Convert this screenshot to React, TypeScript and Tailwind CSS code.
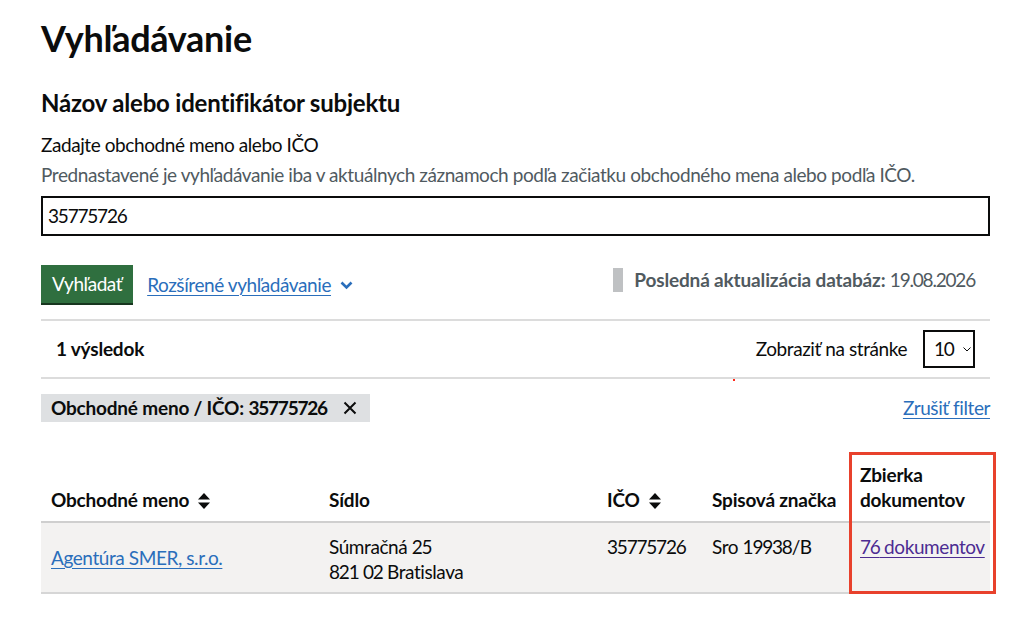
import React from "react";

const font = { fontFamily: "Lato, 'Noto Sans', sans-serif" };

// digits in Lato run wider than the rest of the face, so they get pulled in a little
function Num({ children }: { children: React.ReactNode }) {
  return <span className="tracking-[-1.2px]">{children}</span>;
}

function SortIcon() {
  return (
    <svg width="12" height="16" viewBox="0 0 12 16" className="inline-block ml-[9px] align-[-2px]">
      <path d="M6 0 L12 6.5 H0 Z" fill="#0b0c0c" />
      <path d="M6 16 L12 9.5 H0 Z" fill="#0b0c0c" />
    </svg>
  );
}

export default function App() {
  return (
    <div className="min-h-screen bg-white text-[#0b0c0c] tracking-[-0.42px]" style={font}>
      <div className="px-[41px] pt-[16px] w-[1031px]">
        <h1 className="text-[36px] leading-[44px] font-bold tracking-[-0.3px]">Vyhľadávanie</h1>
        <h2 className="mt-[28px] text-[24px] leading-[30px] font-bold tracking-[-0.2px]">Názov alebo identifikátor subjektu</h2>
        <div className="mt-[14px] text-[19px] leading-[25px]">Zadajte obchodné meno alebo IČO</div>
        <div className="mt-[5px] text-[19px] leading-[25px] text-[#505a5f]">
          Prednastavené je vyhľadávanie iba v aktuálnych záznamoch podľa začiatku obchodného mena alebo podľa IČO.
        </div>
        <div className="mt-[9px] w-[949px] h-[40px] border-2 border-[#0b0c0c] flex items-center px-[5px] text-[19px]">
          <Num>35775726</Num>
        </div>

        <div className="mt-[29px] w-[949px] flex items-start justify-between">
          <div className="flex items-center gap-[14px]">
            <button className="h-[38px] px-[11px] bg-[#2f6f3f] text-white text-[19px] shadow-[0_2px_0_#17361f] mb-[2px]">
              Vyhľadať
            </button>
            <a className="text-[19px] text-[#2a6ebb] underline underline-offset-[3px] decoration-1 flex items-center gap-[9px]" href="#">
              Rozšírené vyhľadávanie
              <svg width="13" height="9" viewBox="0 0 13 9">
                <path d="M1.5 1.5 L6.5 6.5 L11.5 1.5" stroke="#2a6ebb" strokeWidth="2.6" fill="none" />
              </svg>
            </a>
          </div>
          <div className="flex items-center mr-[15px] mt-[1px]">
            <div className="w-[10px] h-[24px] bg-[#bfc1c3] mr-[11px]" />
            <span className="text-[19px] text-[#505a5f]">
              <span className="font-bold tracking-[-0.15px]">Posledná aktualizácia databáz:</span> <Num>19.08.2026</Num>
            </span>
          </div>
        </div>

        <div className="mt-[14px] w-[949px] border-t-2 border-b-2 border-[#dcdcdc] h-[60px] flex items-center justify-between relative">
          <div className="pl-[15px] text-[19px] font-bold tracking-[-0.2px]">1 výsledok</div>
          <div className="flex items-center mr-[15px]">
            <span className="text-[19px] mr-[16px]">Zobraziť na stránke</span>
            <div className="w-[52px] h-[38px] border-2 border-[#0b0c0c] flex items-center pl-[9px] text-[19px]">
              <Num>10</Num>
              <svg width="8" height="5" viewBox="0 0 8 5" className="ml-[9px]">
                <path d="M0.5 0.5 L4 4 L7.5 0.5" stroke="#0b0c0c" strokeWidth="1" fill="none" />
              </svg>
            </div>
          </div>
          <span className="absolute left-[692px] bottom-[-4px] w-[2px] h-[2px] bg-[#ff2a1a]" />
        </div>

        <div className="mt-[15px] w-[949px] flex items-center justify-between">
          <div className="h-[28px] bg-[#dee0e2] flex items-center pl-[10px] pr-[13px] text-[19px] font-bold tracking-[-0.2px]">
            <span>
              Obchodné meno / IČO: <Num>35775726</Num>
            </span>
            <svg width="14" height="14" viewBox="0 0 14 14" className="ml-[16px]">
              <path d="M1.5 1.5 L12.5 12.5 M12.5 1.5 L1.5 12.5" stroke="#0b0c0c" strokeWidth="2" />
            </svg>
          </div>
          <a href="#" className="text-[19px] text-[#2a6ebb] underline underline-offset-[3px] decoration-1">Zrušiť filter</a>
        </div>

        <div className="relative mt-[29px] w-[949px]">
          <table className="w-[949px] border-collapse text-[19px] leading-[25px] table-fixed">
            <colgroup>
              <col className="w-[278px]" />
              <col className="w-[278px]" />
              <col className="w-[105px]" />
              <col className="w-[148px]" />
              <col className="w-[140px]" />
            </colgroup>
            <thead>
              <tr className="border-b-2 border-[#cfcfcf] h-[70px] tracking-[-0.2px]">
                <th className="text-left font-bold align-bottom pl-[10px] pb-[9px]">
                  Obchodné meno<SortIcon />
                </th>
                <th className="text-left font-bold align-bottom pl-[10px] pb-[9px]">Sídlo</th>
                <th className="text-left font-bold align-bottom pl-[10px] pb-[9px]">
                  IČO<SortIcon />
                </th>
                <th className="text-left font-bold align-bottom pl-[10px] pb-[9px] whitespace-nowrap">Spisová značka</th>
                <th className="text-left font-bold align-bottom pl-[10px] pb-[9px]">
                  Zbierka
                  <br />
                  dokumentov
                </th>
              </tr>
            </thead>
            <tbody>
              <tr className="bg-[#f3f2f1] border-b-2 border-[#d6d6d6]">
                <td className="align-middle pl-[10px]">
                  <a href="#" className="text-[#2a6ebb] underline underline-offset-[3px] decoration-1">Agentúra SMER, s.r.o.</a>
                </td>
                <td className="align-top pl-[10px] pt-[11px] pb-[8px]">
                  Súmračná <Num>25</Num>
                  <br />
                  <Num>821</Num> <Num>02</Num> Bratislava
                </td>
                <td className="align-top pl-[10px] pt-[11px]"><Num>35775726</Num></td>
                <td className="align-top pl-[10px] pt-[11px]">Sro <Num>19938</Num>/B</td>
                <td className="align-top pl-[10px] pt-[11px] whitespace-nowrap">
                  <a href="#" className="text-[#4c2c92] underline underline-offset-[3px] decoration-1"><Num>76</Num> dokumentov</a>
                </td>
              </tr>
            </tbody>
          </table>
          <div className="absolute left-[808px] top-0 w-[147px] h-[142px] border-[3px] border-[#e8412c] pointer-events-none" />
        </div>
      </div>
    </div>
  );
}
